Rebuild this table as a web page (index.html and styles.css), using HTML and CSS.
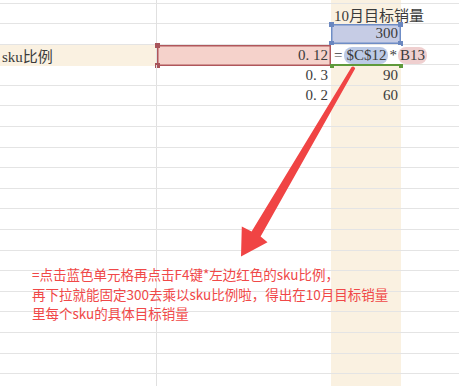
FILE: index.html
```html
<!DOCTYPE html>
<html lang="zh-CN">
<head>
<meta charset="utf-8">
<title>sku比例</title>
<link rel="stylesheet" href="styles.css">
</head>
<body>
<div class="sheet">
  <div class="row top"><div class="cell a"></div><div class="cell b"></div><div class="cell c"></div><div class="cell d"></div></div>
  <div class="row"><div class="cell a"></div><div class="cell b"></div><div class="cell c head">10月目标销量</div><div class="cell d"></div></div>
  <div class="row"><div class="cell a"></div><div class="cell b"></div><div class="cell c num sel-blue">300<i class="h tl"></i><i class="h tr"></i><i class="h bl"></i><i class="h br"></i></div><div class="cell d"></div></div>
  <div class="row hl"><div class="cell a label">sku比例</div><div class="cell b num sel-red">0. 12<i class="h tl"></i><i class="h bl"></i></div><div class="cell c edit"><span class="eq">=</span><span class="pill blue">$C$12</span><span class="op">*</span><span class="pill red">B13</span><i class="g gl"></i><i class="g gr"></i></div><div class="cell d"></div></div>
  <div class="row"><div class="cell a"></div><div class="cell b num">0. 3</div><div class="cell c num">90</div><div class="cell d"></div></div>
  <div class="row"><div class="cell a"></div><div class="cell b num">0. 2</div><div class="cell c num">60</div><div class="cell d"></div></div>
  <div class="row"><div class="cell a"></div><div class="cell b"></div><div class="cell c"></div><div class="cell d"></div></div>
  <div class="row"><div class="cell a"></div><div class="cell b"></div><div class="cell c"></div><div class="cell d"></div></div>
  <div class="row"><div class="cell a"></div><div class="cell b"></div><div class="cell c"></div><div class="cell d"></div></div>
  <div class="row"><div class="cell a"></div><div class="cell b"></div><div class="cell c"></div><div class="cell d"></div></div>
  <div class="row"><div class="cell a"></div><div class="cell b"></div><div class="cell c"></div><div class="cell d"></div></div>
  <div class="row"><div class="cell a"></div><div class="cell b"></div><div class="cell c"></div><div class="cell d"></div></div>
  <div class="row"><div class="cell a"></div><div class="cell b"></div><div class="cell c"></div><div class="cell d"></div></div>
  <div class="row"><div class="cell a"></div><div class="cell b"></div><div class="cell c"></div><div class="cell d"></div></div>
  <div class="row"><div class="cell a"></div><div class="cell b"></div><div class="cell c"></div><div class="cell d"></div></div>
  <div class="row"><div class="cell a"></div><div class="cell b"></div><div class="cell c"></div><div class="cell d"></div></div>
  <div class="row"><div class="cell a"></div><div class="cell b"></div><div class="cell c"></div><div class="cell d"></div></div>
  <div class="row"><div class="cell a"></div><div class="cell b"></div><div class="cell c"></div><div class="cell d"></div></div>
  <div class="row"><div class="cell a"></div><div class="cell b"></div><div class="cell c"></div><div class="cell d"></div></div>
  <div class="row"><div class="cell a"></div><div class="cell b"></div><div class="cell c"></div><div class="cell d"></div></div>

  <svg class="arrow" width="459" height="386" viewBox="0 0 459 386" aria-hidden="true">
    <path d="M351.6 66.9 Q354 65.6 355.2 68.4 L260.6 236.4 L267.5 242.2 L241 256.5 L241.8 226.6 L251.6 231.4 Z" fill="#f04444"/>
  </svg>

  <p class="note">=点击蓝色单元格再点击F4键*左边红色的sku比例，<br>再下拉就能固定300去乘以sku比例啦，得出在10月目标销量<br>里每个sku的具体目标销量</p>
</div>
</body>
</html>
```

FILE: styles.css
```css
html, body {
  margin: 0;
  padding: 0;
  background: #ffffff;
}

.sheet {
  position: relative;
  width: 459px;
  height: 386px;
  overflow: hidden;
  font-family: "Liberation Serif", "Noto Sans CJK SC", serif;
  font-size: 15px;
  color: #3b3b3b;
}

.row {
  display: grid;
  grid-template-columns: 157px 174px 70px 58px;
  height: 20.6px;
  box-sizing: border-box;
  border-top: 1px solid #e4e4e4;
}

.row.top {
  height: 2.5px;
  border-top: none;
}

.cell {
  position: relative;
  box-sizing: border-box;
  display: flex;
  align-items: center;
  white-space: nowrap;
  min-width: 0;
}

.cell.a {
  border-right: 1px solid #e0e0e0;
}

.cell.c {
  background: #faf1e1;
}

.row.hl .cell.a {
  background: #faf1e1;
}

.head {
  padding-left: 3px;
  overflow: visible;
}

.label {
  padding-left: 2px;
}

.num {
  justify-content: flex-end;
  padding-right: 3px;
  font-family: "Liberation Serif", serif;
}

.cell.sel-blue {
  background: #c6cce5;
  box-shadow: inset 0 0 0 1.5px #6f8dc6;
}

.cell.sel-red {
  background: #f5d2cb;
  box-shadow: inset 0 0 0 1.5px #b0565b;
}

.h {
  position: absolute;
  width: 5px;
  height: 5px;
  background: #6a87c0;
}

.sel-red .h {
  background: #a8545a;
}

.h.tl { left: -2px; top: -2px; }
.h.tr { right: -2px; top: -2px; }
.h.bl { left: -2px; bottom: -2px; }
.h.br { right: -2px; bottom: -2px; }

.cell.edit {
  overflow: visible;
  z-index: 2;
  padding-left: 3px;
  background: #ffffff;
  box-shadow: inset 0 -2px 0 #5f9a3c;
  font-family: "Liberation Serif", serif;
}

.eq {
  margin-right: 2px;
}

.pill {
  display: inline-flex;
  align-items: center;
  height: 17px;
  padding: 0 2px;
  border-radius: 8px;
}

.pill.blue {
  background: #bccae6;
}

.pill.red {
  background: #efcfcf;
}

.op {
  margin: 0 1px;
}

.g {
  position: absolute;
  bottom: -2px;
  width: 4px;
  height: 4px;
  background: #5f9a3c;
}

.g.gl { left: -1px; }
.g.gr { right: -2px; }

.arrow {
  position: absolute;
  left: 0;
  top: 0;
  z-index: 3;
  pointer-events: none;
}

.note {
  position: absolute;
  left: 32px;
  top: 265px;
  margin: 0;
  z-index: 4;
  font-family: "Noto Sans CJK SC", "Noto Sans", sans-serif;
  font-size: 13.5px;
  line-height: 19.5px;
  color: #f04848;
  white-space: nowrap;
}
```
